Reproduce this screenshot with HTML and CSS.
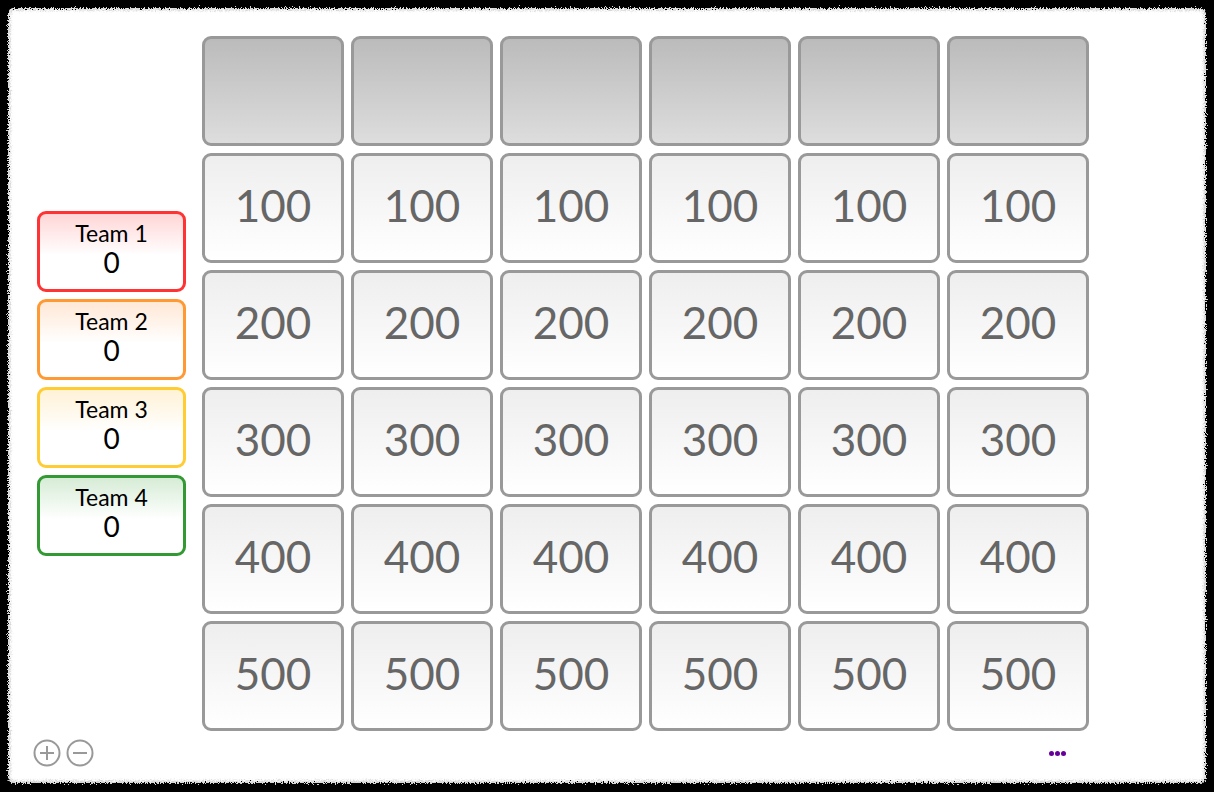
FILE: index.html
```html
<!DOCTYPE html>
<html>
<head>
<meta charset="utf-8">
<link rel="stylesheet" href="styles.css">
</head>
<body>
<svg class="defs" width="0" height="0" aria-hidden="true">
  <filter id="rough" x="-2%" y="-2%" width="104%" height="104%">
    <feTurbulence type="fractalNoise" baseFrequency="0.8" numOctaves="2" seed="3" result="n"/>
    <feDisplacementMap in="SourceGraphic" in2="n" scale="7" xChannelSelector="R" yChannelSelector="G"/>
  </filter>
</svg>
<div class="frame">
  <div class="paper"></div>
  <div class="main">
    <div class="teams">
      <div class="team t1"><div class="tname">Team 1</div><div class="tscore">0</div></div>
      <div class="team t2"><div class="tname">Team 2</div><div class="tscore">0</div></div>
      <div class="team t3"><div class="tname">Team 3</div><div class="tscore">0</div></div>
      <div class="team t4"><div class="tname">Team 4</div><div class="tscore">0</div></div>
    </div>
    <div class="board">
      <div class="tile head"></div><div class="tile head"></div><div class="tile head"></div><div class="tile head"></div><div class="tile head"></div><div class="tile head"></div>
      <div class="tile">100</div><div class="tile">100</div><div class="tile">100</div><div class="tile">100</div><div class="tile">100</div><div class="tile">100</div>
      <div class="tile">200</div><div class="tile">200</div><div class="tile">200</div><div class="tile">200</div><div class="tile">200</div><div class="tile">200</div>
      <div class="tile">300</div><div class="tile">300</div><div class="tile">300</div><div class="tile">300</div><div class="tile">300</div><div class="tile">300</div>
      <div class="tile">400</div><div class="tile">400</div><div class="tile">400</div><div class="tile">400</div><div class="tile">400</div><div class="tile">400</div>
      <div class="tile">500</div><div class="tile">500</div><div class="tile">500</div><div class="tile">500</div><div class="tile">500</div><div class="tile">500</div>
    </div>
  </div>
  <div class="footer">
    <div class="zoom">
      <svg class="zbtn" viewBox="0 0 28 28" width="28" height="28"><circle cx="14" cy="14" r="12.5" fill="none" stroke="#999" stroke-width="2"/><path d="M7 14h14M14 7v14" stroke="#999" stroke-width="2"/></svg>
      <svg class="zbtn" viewBox="0 0 28 28" width="28" height="28"><circle cx="14" cy="14" r="12.5" fill="none" stroke="#999" stroke-width="2"/><path d="M7 14h14" stroke="#999" stroke-width="2"/></svg>
    </div>
    <div class="more"><span></span><span></span><span></span></div>
  </div>
</div>
</body>
</html>
```
FILE: styles.css
```css
html, body {
  margin: 0;
  padding: 0;
  background: #000;
}
body {
  width: 1214px;
  height: 792px;
  overflow: hidden;
  font-family: Lato, "Open Sans", sans-serif;
}
.defs {
  position: absolute;
  width: 0;
  height: 0;
}
.frame {
  position: relative;
  margin: 8px 0 0 8px;
  width: 1198px;
  height: 775px;
  display: flex;
  flex-direction: column;
}
.paper {
  position: absolute;
  inset: 0;
  background: #fff;
  border-radius: 6px;
  box-shadow: inset 0 0 3px 2px #d0d0d0;
  filter: url(#rough);
}
.main {
  position: relative;
  display: flex;
  align-items: center;
  padding: 28px 0 0 29px;
  gap: 16px;
}
.teams {
  display: flex;
  flex-direction: column;
  gap: 7px;
}
.team {
  width: 143px;
  height: 75px;
  border: 3px solid;
  border-radius: 9px;
  display: flex;
  flex-direction: column;
  align-items: center;
  justify-content: center;
  color: #000;
  box-sizing: content-box;
}
.t1 { border-color: #f33; background: linear-gradient(#ffd6d6, #fff 55%); }
.t2 { border-color: #f93; background: linear-gradient(#ffe8d6, #fff 55%); }
.t3 { border-color: #fc3; background: linear-gradient(#fff2d6, #fff 55%); }
.t4 { border-color: #393; background: linear-gradient(#d6ecd6, #fff 55%); }
.tname {
  font-size: 23px;
  line-height: 27px;
  margin-top: -6px;
}
.tscore {
  font-size: 28px;
  line-height: 30px;
}
.board {
  display: grid;
  grid-template-columns: repeat(6, 142px);
  grid-auto-rows: 110px;
  gap: 7px;
}
.tile {
  box-sizing: border-box;
  border: 3px solid #999;
  border-radius: 9px;
  background: linear-gradient(#eee, #fff);
  color: #666;
  font-size: 44px;
  display: flex;
  align-items: center;
  justify-content: center;
  padding-bottom: 6px;
}
.tile.head {
  background: linear-gradient(#bbb, #ddd);
}
.footer {
  position: relative;
  display: flex;
  align-items: center;
  justify-content: space-between;
  margin-top: 8px;
  padding: 0 140px 0 25px;
  height: 28px;
}
.zoom {
  display: flex;
  gap: 5px;
}
.zbtn {
  display: block;
}
.more {
  display: flex;
  gap: 1px;
}
.more span {
  width: 5px;
  height: 5px;
  border-radius: 50%;
  background: #609;
}
```
